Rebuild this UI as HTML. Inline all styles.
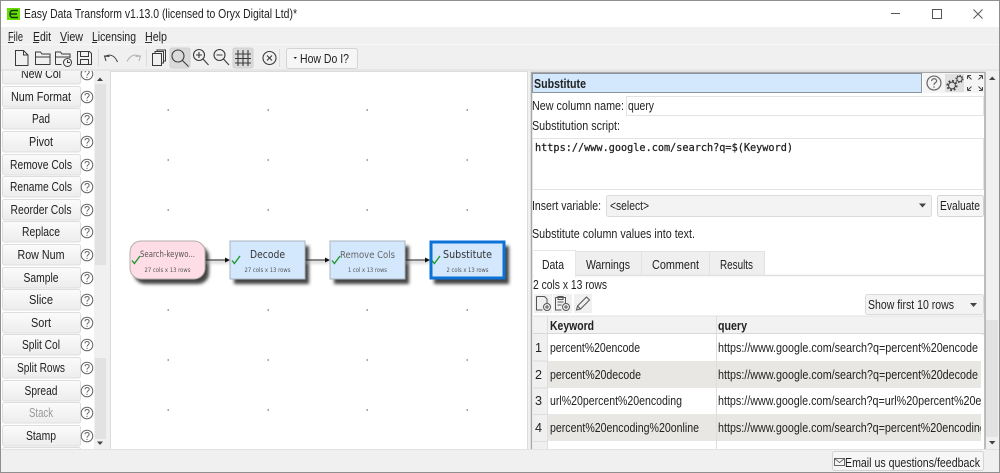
<!DOCTYPE html>
<html><head><meta charset="utf-8"><style>
html,body{margin:0;padding:0;width:1000px;height:473px;overflow:hidden;background:#f0f0f0}
svg{display:block;filter:blur(.35px)}
text{font-family:"Liberation Sans",sans-serif;font-size:12.6px;fill:#222}
.b{font-weight:bold}
.n{font-family:"DejaVu Sans",sans-serif;font-size:11px;fill:#333}
.s{font-family:"DejaVu Sans",sans-serif;font-size:6px;fill:#555;text-anchor:middle}
.m{text-anchor:middle}
</style></head><body>
<svg width="1000" height="473" viewBox="0 0 1000 473" xmlns="http://www.w3.org/2000/svg">
<defs>
<linearGradient id="btn" x1="0" y1="0" x2="0" y2="1"><stop offset="0" stop-color="#fbfbfb"/><stop offset="1" stop-color="#ededed"/></linearGradient>
<filter id="sh" x="-20%" y="-20%" width="150%" height="160%"><feGaussianBlur stdDeviation="1.5"/></filter>
<g id="help"><circle r="5.8" fill="none" stroke="#666" stroke-width="1"/><path d="M-2-1.6C-2-4.2 2.2-4.2 2.2-1.6 2.2-.2 0-.3 0 1.6" fill="none" stroke="#666"/><path d="M0 2.8v1.2" stroke="#666"/></g>
<g id="bt"><rect x="2.5" y="0.5" width="78" height="20.5" rx="2" fill="url(#btn)" stroke="#dedede"/></g>
<path id="ck" d="M0 4.5L2.4 7.5 8 0" fill="none" stroke="#1f9a2e" stroke-width="1.4"/>
<clipPath id="lc"><rect x="1" y="71" width="93" height="378"/></clipPath>
<clipPath id="qc"><rect x="716" y="334" width="265" height="115"/></clipPath>
</defs>

<!-- title bar -->
<rect width="1000" height="27" fill="#fff"/>
<rect x="7" y="8" width="13" height="12" fill="#66e000"/>
<path d="M18 10.500H12.500Q10 10.500 10 14T12.500 17.500H18M10.500 14H17" fill="none" stroke="#143c10" stroke-width="1.500"/>
<text x="24" y="18" textLength="273" lengthAdjust="spacingAndGlyphs">Easy Data Transform v1.13.0 (licensed to Oryx Digital Ltd)*</text>
<path d="M891 13.500h9" stroke="#555"/>
<rect x="932.500" y="9.500" width="9" height="9" fill="none" stroke="#555"/>
<path d="M973.500 9.500l9 9M982.500 9.500l-9 9" stroke="#555"/>

<!-- menu -->
<rect y="27" width="1000" height="17" fill="#f0f0f0"/>
<text x="8" y="41" textLength="15" lengthAdjust="spacingAndGlyphs">File</text>
<text x="33" y="41" textLength="18" lengthAdjust="spacingAndGlyphs">Edit</text>
<text x="60" y="41" textLength="23" lengthAdjust="spacingAndGlyphs">View</text>
<text x="92" y="41" textLength="44" lengthAdjust="spacingAndGlyphs">Licensing</text>
<text x="145" y="41" textLength="22" lengthAdjust="spacingAndGlyphs">Help</text>
<path d="M8 42.500h6M33 42.500h6M60 42.500h7M92 42.500h5M145 42.500h7" stroke="#333"/>

<!-- toolbar -->
<rect y="44" width="1000" height="26" fill="#f0f0f0"/>
<rect y="44" width="1000" height="1" fill="#f7f7f7"/>
<rect y="69" width="1000" height="2" fill="#e6e6e6"/>
<g fill="none" stroke="#3a3a3a" stroke-width="1">
<path d="M15.500 50.500h8l4.500 4.500v10.500h-12.500zM23.500 50.500v4.500h4.500"/>
<path d="M35.500 64.500v-12.500h5l1.500 2h8v10.500zM35.500 57h14.500"/>
<path d="M55.500 64.500v-12.500h5l1.500 2h8v4M55.500 57h14.500M55.500 64.500h6"/>
<circle cx="67.500" cy="62.500" r="4"/><path d="M67.500 60v2.500h2.500"/>
<path d="M77.500 51.500h12l2 2v11h-14zM80.500 51.500v5h8v-5M80.500 64.500v-5h8v5"/>
<path d="M106 61l-1.500-5 5 .5M105 56.500c3-2 9-3 12.500 5.500"/>
<path d="M139 61l1.500-5-5 .5M140 56.500c-3-2-9-3-13 5" stroke="#b0b0b0"/>
<rect x="152.500" y="53.500" width="9" height="12" fill="#f0f0f0"/>
<path d="M155 53.500v-2h8.500v11.500h-2M157 51.500v-1.500h8.500v11h-2"/>
</g>
<path d="M98.500 49v18M146.500 49v18M279.500 49v18" stroke="#dcdcdc"/>
<rect x="170" y="48" width="20" height="20" rx="2" fill="#dadada" stroke="#d0d0d0"/>
<rect x="233" y="48" width="20" height="20" rx="2" fill="#dadada" stroke="#d0d0d0"/>
<g fill="none" stroke="#3a3a3a" stroke-width="1.100">
<circle cx="178" cy="56" r="6"/><path d="M182.500 60.500l6 6"/>
<circle cx="199" cy="55" r="5.500"/><path d="M203 59l5.500 6M196 55h6M199 52v6"/>
<circle cx="219.500" cy="55" r="5.500"/><path d="M223.500 59l5.500 6M216.500 55h6"/>
<path d="M238 50v16M243 50v16M248 50v16M235 54h16M235 58.500h16M235 63h16"/>
<circle cx="269.500" cy="58" r="6.500"/><path d="M267 55.500l5 5M272 55.500l-5 5"/>
</g>
<rect x="286.500" y="48.500" width="71" height="20" rx="2" fill="#f6f6f6" stroke="#d4d4d4"/>
<path d="M293.500 57h3.500l-1.750 2z" fill="#222"/>
<text x="300" y="63" textLength="49" lengthAdjust="spacingAndGlyphs">How Do I?</text>

<!-- left panel -->
<rect x="1" y="71" width="93" height="378" fill="#fff"/>
<g clip-path="url(#lc)">
<use href="#bt" y="63"/><use href="#bt" y="86"/><use href="#bt" y="108"/><use href="#bt" y="131"/><use href="#bt" y="154"/><use href="#bt" y="176"/><use href="#bt" y="199"/><use href="#bt" y="221"/><use href="#bt" y="244"/><use href="#bt" y="267"/><use href="#bt" y="289"/><use href="#bt" y="312"/><use href="#bt" y="334"/><use href="#bt" y="357"/><use href="#bt" y="380"/><use href="#bt" y="402"/><use href="#bt" y="425"/><use href="#bt" y="447"/>
<use href="#help" x="87" y="74"/><use href="#help" x="87" y="97"/><use href="#help" x="87" y="119"/><use href="#help" x="87" y="142"/><use href="#help" x="87" y="165"/><use href="#help" x="87" y="187"/><use href="#help" x="87" y="210"/><use href="#help" x="87" y="232"/><use href="#help" x="87" y="255"/><use href="#help" x="87" y="278"/><use href="#help" x="87" y="300"/><use href="#help" x="87" y="323"/><use href="#help" x="87" y="345"/><use href="#help" x="87" y="368"/><use href="#help" x="87" y="391"/><use href="#help" x="87" y="413"/><use href="#help" x="87" y="436"/>
<text class="m" x="41" y="78" textLength="40" lengthAdjust="spacingAndGlyphs">New Col</text>
<text class="m" x="41" y="101" textLength="60" lengthAdjust="spacingAndGlyphs">Num Format</text>
<text class="m" x="41" y="123" textLength="18" lengthAdjust="spacingAndGlyphs">Pad</text>
<text class="m" x="41" y="146" textLength="24" lengthAdjust="spacingAndGlyphs">Pivot</text>
<text class="m" x="41" y="169" textLength="62" lengthAdjust="spacingAndGlyphs">Remove Cols</text>
<text class="m" x="41" y="191" textLength="62" lengthAdjust="spacingAndGlyphs">Rename Cols</text>
<text class="m" x="41" y="214" textLength="61" lengthAdjust="spacingAndGlyphs">Reorder Cols</text>
<text class="m" x="41" y="236" textLength="38" lengthAdjust="spacingAndGlyphs">Replace</text>
<text class="m" x="41" y="259" textLength="47" lengthAdjust="spacingAndGlyphs">Row Num</text>
<text class="m" x="41" y="282" textLength="35" lengthAdjust="spacingAndGlyphs">Sample</text>
<text class="m" x="41" y="304" textLength="24" lengthAdjust="spacingAndGlyphs">Slice</text>
<text class="m" x="41" y="327" textLength="20" lengthAdjust="spacingAndGlyphs">Sort</text>
<text class="m" x="41" y="349" textLength="38" lengthAdjust="spacingAndGlyphs">Split Col</text>
<text class="m" x="41" y="372" textLength="48" lengthAdjust="spacingAndGlyphs">Split Rows</text>
<text class="m" x="41" y="395" textLength="33" lengthAdjust="spacingAndGlyphs">Spread</text>
<text class="m" x="41" y="417" textLength="24" lengthAdjust="spacingAndGlyphs" style="fill:#999">Stack</text>
<text class="m" x="41" y="440" textLength="30" lengthAdjust="spacingAndGlyphs">Stamp</text>
</g>
<!-- left scrollbar -->
<rect x="94" y="71" width="13" height="378" fill="#f0f0f0"/>
<rect x="95" y="84" width="11" height="181" fill="#e2e2e2"/>
<rect x="95" y="358" width="11" height="81" fill="#e2e2e2"/>
<path d="M97 81h6l-3-3.500z" fill="#444"/>
<path d="M97 441.500h6l-3 3.500z" fill="#444"/>

<!-- canvas -->
<rect x="110.500" y="71.500" width="417" height="378" fill="#fff" stroke="#dcdcdc"/>
<path d="M167.500 110h1.500M267.500 110h1.500M366.500 110h1.500M466.500 110h1.500M167.500 160h1.500M267.500 160h1.500M366.500 160h1.500M466.500 160h1.500M167.500 210h1.500M267.500 210h1.500M366.500 210h1.500M466.500 210h1.500M167.500 310h1.500M267.500 310h1.500M366.500 310h1.500M466.500 310h1.500M167.500 360h1.500M267.500 360h1.500M366.500 360h1.500M466.500 360h1.500M167.500 410h1.500M267.500 410h1.500M366.500 410h1.500M466.500 410h1.500" stroke="#888" stroke-width="1.500"/>

<!-- node shadows -->
<g fill="#444" filter="url(#sh)">
<rect x="134" y="246" width="75" height="38" rx="11"/>
<rect x="234" y="246" width="75" height="38"/>
<rect x="334" y="246" width="75" height="38"/>
<rect x="434" y="246" width="75" height="38"/>
<path d="M205 262h25M305 262h25M405 262h25" stroke="#aaa" stroke-width="1.500"/>
</g>
<!-- arrows -->
<path d="M205 260h21M305 260h21M405 260h21" stroke="#222" stroke-width="1"/>
<path d="M225 257.500l5 2.500-5 2.500zM325 257.500l5 2.500-5 2.500zM425 257.500l5 2.500-5 2.500z" fill="#111"/>
<!-- nodes -->
<rect x="130" y="241" width="75" height="38" rx="11" fill="#ffdde6" stroke="#b5adb0"/>
<rect x="230" y="241" width="75" height="38" fill="#d3e7fd" stroke="#a9b4bf"/>
<rect x="330" y="241" width="75" height="38" fill="#d3e7fd" stroke="#a9b4bf"/>
<rect x="431" y="242" width="73" height="36" fill="#d3e7fd" stroke="#0a72d8" stroke-width="3"/>
<text class="n" x="140" y="257" textLength="55" lengthAdjust="spacingAndGlyphs" style="font-size:9px;fill:#555">Search-keywo...</text>
<text class="n" x="250" y="258" textLength="35" lengthAdjust="spacingAndGlyphs">Decode</text>
<text class="n" x="340" y="258" textLength="55" lengthAdjust="spacingAndGlyphs" style="fill:#666;font-size:10px">Remove Cols</text>
<text class="n" x="443" y="258" textLength="49" lengthAdjust="spacingAndGlyphs">Substitute</text>
<text class="s" x="167.500" y="272" textLength="46" lengthAdjust="spacingAndGlyphs">27 cols x 13 rows</text>
<text class="s" x="267.500" y="272" textLength="46" lengthAdjust="spacingAndGlyphs">27 cols x 13 rows</text>
<text class="s" x="367.500" y="272" textLength="39" lengthAdjust="spacingAndGlyphs">1 col x 13 rows</text>
<text class="s" x="467.500" y="272" textLength="42" lengthAdjust="spacingAndGlyphs">2 cols x 13 rows</text>
<use href="#ck" x="132" y="256"/><use href="#ck" x="232" y="256"/><use href="#ck" x="332" y="256"/><use href="#ck" x="432" y="256"/>

<!-- right panel -->
<rect x="531" y="72" width="454" height="377" fill="#fff"/>
<path d="M531.500 449V72.500H985V449" fill="none" stroke="#a8a8a8" stroke-width="1.500"/>
<rect x="532.500" y="73.500" width="389" height="19" fill="#d3e7fd" stroke="#8a949e"/>
<text class="b" x="534" y="88" textLength="52" lengthAdjust="spacingAndGlyphs">Substitute</text>
<rect x="923" y="73" width="61" height="20" fill="#f5f5f5"/>
<rect x="945" y="74" width="19" height="18" fill="#e0e0e0"/>
<g transform="translate(934 83) scale(1.200)"><use href="#help"/></g>
<g fill="none" stroke="#444" stroke-width="1">
<circle cx="952" cy="85.500" r="4.600" stroke-width="2" stroke-dasharray="1.800 1.800"/>
<circle cx="952" cy="85.500" r="3.400"/>
<circle cx="959.500" cy="79" r="2.600"/>
<circle cx="959.500" cy="79" r="3.600" stroke-dasharray="1.400 1.400"/>
<path d="M967.500 75.500l4 4M967.500 75.500h3.500M967.500 75.500v3.500M982.500 75.500l-4 4M982.500 75.500h-3.500M982.500 75.500v3.500M967.500 90.500l4-4M967.500 90.500h3.500M967.500 90.500v-3.500M982.500 90.500l-4-4M982.500 90.500h-3.500M982.500 90.500v-3.500"/>
</g>
<text x="532" y="110" textLength="92" lengthAdjust="spacingAndGlyphs">New column name:</text>
<rect x="626.500" y="96.500" width="357" height="19" fill="#fff" stroke="#e3e3e3"/>
<text x="628" y="110" textLength="26" lengthAdjust="spacingAndGlyphs">query</text>
<text x="532" y="130" textLength="88" lengthAdjust="spacingAndGlyphs">Substitution script:</text>
<rect x="532.500" y="138.500" width="451" height="51" fill="#fff" stroke="#e3e3e3"/>
<text x="535" y="151" stroke="#222" stroke-width=".25" style='font-family:"DejaVu Sans Mono",monospace;font-size:10.200px' textLength="258" lengthAdjust="spacingAndGlyphs">https://www.google.com/search?q=$(Keyword)</text>
<text x="532" y="210" textLength="69" lengthAdjust="spacingAndGlyphs">Insert variable:</text>
<rect x="606.500" y="195.500" width="325" height="21" rx="2" fill="#f3f3f3" stroke="#dcdcdc"/>
<text x="610" y="210" textLength="39" lengthAdjust="spacingAndGlyphs">&lt;select&gt;</text>
<path d="M919 203.500h7l-3.500 4z" fill="#444"/>
<rect x="937.500" y="195.500" width="46" height="21" rx="2" fill="#f6f6f6" stroke="#d4d4d4"/>
<text x="940" y="210" textLength="40" lengthAdjust="spacingAndGlyphs">Evaluate</text>
<text x="532" y="238" textLength="163" lengthAdjust="spacingAndGlyphs">Substitute column values into text.</text>

<!-- tabs -->
<rect x="575.500" y="251.500" width="66" height="24" fill="#efefef" stroke="#e2e2e2"/>
<rect x="641.500" y="251.500" width="68" height="24" fill="#efefef" stroke="#e2e2e2"/>
<rect x="709.500" y="251.500" width="55" height="24" fill="#efefef" stroke="#e2e2e2"/>
<path d="M532 275.500h452" stroke="#e0e0e0" stroke-width="1.500"/>
<rect x="532.500" y="250.500" width="43" height="26" fill="#fff" stroke="#e6e6e6"/>
<rect x="534" y="274" width="41" height="3" fill="#fff"/>
<text x="542" y="269" textLength="22" lengthAdjust="spacingAndGlyphs">Data</text>
<text x="586" y="269" textLength="44" lengthAdjust="spacingAndGlyphs">Warnings</text>
<text x="652" y="269" textLength="47" lengthAdjust="spacingAndGlyphs">Comment</text>
<text x="720" y="269" textLength="33" lengthAdjust="spacingAndGlyphs">Results</text>
<text x="533" y="289" textLength="74" lengthAdjust="spacingAndGlyphs">2 cols x 13 rows</text>

<!-- table tools -->
<rect x="534" y="294" width="18" height="19" fill="#f0f0f0"/>
<rect x="553" y="294" width="19" height="19" fill="#f0f0f0"/>
<rect x="574" y="294" width="18" height="19" fill="#f0f0f0"/>
<g fill="none" stroke="#555" stroke-width="1">
<path d="M536.500 296.500h8l2.500 2.500v4M536.500 296.500v13.500h6"/><circle cx="547" cy="307" r="3.500"/><path d="M545 307h4M547 305v4"/>
<path d="M555.500 297.500h10v6M555.500 297.500v12.500h6M558 296.500h5v3h-5zM557.500 302h6M557.500 305h4"/><circle cx="566" cy="307" r="3.500"/><path d="M564 307h4M566 305v4"/>
<path d="M576.500 310l1-4 9-9 3 3-9 9zM577.500 306l3 3"/>
</g>
<rect x="865.500" y="294.500" width="118" height="20" rx="2" fill="#f3f3f3" stroke="#dcdcdc"/>
<text x="868" y="309" textLength="86" lengthAdjust="spacingAndGlyphs">Show first 10 rows</text>
<path d="M970 303h7l-3.500 4z" fill="#444"/>

<!-- table -->
<rect x="533" y="316" width="451" height="18" fill="#f2f2f2"/>
<rect x="533" y="333" width="451" height="1.500" fill="#d8d8d8"/>
<path d="M533 316h451" stroke="#e3e3e3"/>
<rect x="533" y="334" width="15" height="115" fill="#f0f0f0"/>
<rect x="548" y="334" width="433" height="27" fill="#fff"/>
<rect x="548" y="361" width="433" height="27" fill="#e9e7e3"/>
<rect x="548" y="388" width="433" height="26" fill="#fff"/>
<rect x="548" y="414" width="433" height="27" fill="#e9e7e3"/>
<path d="M533 361h15M533 388h15M533 414.500h15M533 441.500h15" stroke="#dddddd"/>
<path d="M547.500 316v133M716.500 316v133" stroke="#dedede"/>
<text class="b" x="550" y="330" textLength="44" lengthAdjust="spacingAndGlyphs">Keyword</text>
<text class="b" x="718" y="330" textLength="29" lengthAdjust="spacingAndGlyphs">query</text>
<text x="535" y="352">1</text><text x="535" y="379">2</text><text x="535" y="405">3</text><text x="535" y="432">4</text>
<text x="550" y="352" textLength="90" lengthAdjust="spacingAndGlyphs">percent%20encode</text>
<text x="550" y="379" textLength="91" lengthAdjust="spacingAndGlyphs">percent%20decode</text>
<text x="550" y="405" textLength="132" lengthAdjust="spacingAndGlyphs">url%20percent%20encoding</text>
<text x="550" y="432" textLength="149" lengthAdjust="spacingAndGlyphs">percent%20encoding%20online</text>
<g clip-path="url(#qc)">
<text x="718" y="352" textLength="260" lengthAdjust="spacingAndGlyphs">https://www.google.com/search?q=percent%20encode</text>
<text x="718" y="379" textLength="260" lengthAdjust="spacingAndGlyphs">https://www.google.com/search?q=percent%20decode</text>
<text x="718" y="405" textLength="301" lengthAdjust="spacingAndGlyphs">https://www.google.com/search?q=url%20percent%20encoding</text>
<text x="718" y="432" textLength="318" lengthAdjust="spacingAndGlyphs">https://www.google.com/search?q=percent%20encoding%20online</text>
</g>

<!-- right scrollbar -->
<rect x="986" y="71" width="13" height="378" fill="#f0f0f0"/>
<rect x="986" y="320" width="12" height="117" fill="#e2e2e2"/>
<path d="M989 80h6.500l-3.250-3.500z" fill="#444"/>
<path d="M989 441h6.500l-3.250 3.500z" fill="#444"/>

<!-- status -->
<rect y="449" width="1000" height="23" fill="#f0f0f0"/>
<rect y="449" x="1" width="998" height="1" fill="#e2e2e2"/>
<rect x="832.500" y="451.500" width="151" height="19" rx="2" fill="#f6f6f6" stroke="#d4d4d4"/>
<rect x="834.500" y="458.500" width="10" height="7" fill="none" stroke="#444" stroke-width=".8"/>
<path d="M834.500 458.500l5 4 5-4" fill="none" stroke="#444" stroke-width=".8"/>
<text x="845" y="467" textLength="135" lengthAdjust="spacingAndGlyphs">Email us questions/feedback</text>

<!-- window border -->
<rect x=".5" y=".5" width="999" height="472" fill="none" stroke="#8f8f8f"/>
</svg>
</body></html>
